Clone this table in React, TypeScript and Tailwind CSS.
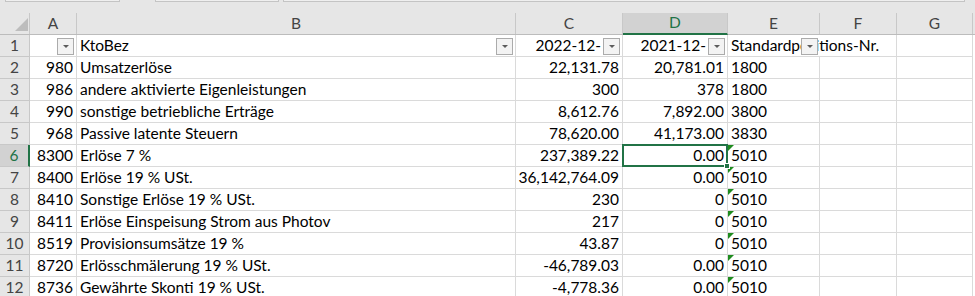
import React from "react";

const cols = [
  { key: "A", w: 47 },
  { key: "B", w: 439 },
  { key: "C", w: 107 },
  { key: "D", w: 105 },
  { key: "E", w: 92 },
  { key: "F", w: 77 },
  { key: "G", w: 76 },
];

const rows: Array<[string, string, string, string, string]> = [
  ["980", "Umsatzerlöse", "22,131.78", "20,781.01", "1800"],
  ["986", "andere aktivierte Eigenleistungen", "300", "378", "1800"],
  ["990", "sonstige betriebliche Erträge", "8,612.76", "7,892.00", "3800"],
  ["968", "Passive latente Steuern", "78,620.00", "41,173.00", "3830"],
  ["8300", "Erlöse 7 %", "237,389.22", "0.00", "5010"],
  ["8400", "Erlöse 19 % USt.", "36,142,764.09", "0.00", "5010"],
  ["8410", "Sonstige Erlöse 19 % USt.", "230", "0", "5010"],
  ["8411", "Erlöse Einspeisung Strom aus Photov", "217", "0", "5010"],
  ["8519", "Provisionsumsätze 19 %", "43.87", "0", "5010"],
  ["8720", "Erlösschmälerung 19 % USt.", "-46,789.03", "0.00", "5010"],
  ["8736", "Gewährte Skonti 19 % USt.", "-4,778.36", "0.00", "5010"],
];

function FilterButton() {
  return (
    <div className="absolute right-[2px] top-[3px] w-[17px] h-[17px] border border-[#ababab] bg-[#f3f3f3] flex items-center justify-center">
      <div className="w-0 h-0 border-l-[3.5px] border-r-[3.5px] border-t-[3.5px] border-l-transparent border-r-transparent border-t-[#5c5c5c]" />
    </div>
  );
}

function ErrorMark() {
  return (
    <div className="absolute left-0 top-0 w-0 h-0 border-t-[6px] border-r-[6px] border-t-[#1e8c1e] border-r-transparent" />
  );
}

export default function App() {
  const cell = "relative h-[22px] border-r border-b border-[#dadada] flex items-center";
  return (
    <div className="w-[975px] h-[296px] overflow-hidden bg-white text-black" style={{ fontFamily: "Lato, 'Open Sans', sans-serif" }}>
      {/* formula bar remnants */}
      <div className="h-[13px] bg-[#e6e6e6] flex items-start">
        <div className="ml-[5px] w-[115px] h-[2px] border-x border-b border-[#c4c4c4] bg-[#efefef]" />
        <div className="ml-[35px] w-[124px] h-[2px] border-x border-b border-[#c4c4c4] bg-[#efefef]" />
        <div className="ml-[4px] w-[682px] h-[2px] border-x border-b border-[#c4c4c4] bg-[#efefef]" />
      </div>

      {/* column headers */}
      <div className="flex h-[22px] bg-[#e6e6e6] border-b border-[#bcbcbc] text-[15.5px] text-[#444]">
        <div className="relative w-[30px] shrink-0 border-r border-[#c8c8c8]">
          <svg className="absolute left-[15px] top-[5px]" width="13" height="13" viewBox="0 0 13 13">
            <polygon points="13,0 13,13 0,13" fill="#bdbdbd" />
          </svg>
        </div>
        {cols.map((c) => (
          <div
            key={c.key}
            style={{ width: c.w }}
            className={
              c.key === "D"
                ? "shrink-0 flex items-center justify-center bg-[#d2d2d2] text-[#217346] border-r border-[#c8c8c8] border-b-2 border-b-[#217346] -mb-px"
                : "shrink-0 flex items-center justify-center border-r border-[#c8c8c8]"
            }
          >
            {c.key}
          </div>
        ))}
      </div>

      {/* row 1 (header row of data) */}
      <div className="flex text-[15.5px]">
        <div className="h-[22px] w-[30px] shrink-0 bg-[#e6e6e6] border-r border-b border-[#c8c8c8] flex items-center justify-center text-[#444]">1</div>
        <div className={cell} style={{ width: 47 }}>
          <FilterButton />
        </div>
        <div className={cell + " pl-[3px]"} style={{ width: 439 }}>
          KtoBez
          <FilterButton />
        </div>
        <div className={cell + " justify-end pr-[21px]"} style={{ width: 107 }}>
          2022-12-
          <FilterButton />
        </div>
        <div className={cell + " justify-end pr-[21px]"} style={{ width: 105 }}>
          2021-12-
          <FilterButton />
        </div>
        <div className="relative h-[22px] border-b border-[#dadada] flex items-center pl-[3px] whitespace-nowrap z-10" style={{ width: 92 }}>
          Standardpositions-Nr.
          <FilterButton />
        </div>
        <div className={cell} style={{ width: 77 }} />
        <div className={cell} style={{ width: 76 }} />
      </div>

      {rows.map((r, i) => {
        const n = i + 2;
        const sel = n === 6;
        return (
          <div key={n} className="flex text-[15.5px]">
            <div
              className={
                sel
                  ? "h-[22px] w-[30px] shrink-0 bg-[#d2d2d2] border-r-2 border-r-[#217346] border-b border-b-[#c8c8c8] flex items-center justify-center text-[#217346]"
                  : "h-[22px] w-[30px] shrink-0 bg-[#e6e6e6] border-r border-b border-[#c8c8c8] flex items-center justify-center text-[#444]"
              }
            >
              {n}
            </div>
            <div className={cell + " justify-end pr-[3px]"} style={{ width: 47 }}>{r[0]}</div>
            <div className={cell + " pl-[3px] whitespace-nowrap"} style={{ width: 439 }}>{r[1]}</div>
            <div className={cell + " justify-end pr-[3px]"} style={{ width: 107 }}>{r[2]}</div>
            <div className={cell + " justify-end pr-[3px]"} style={{ width: 105 }}>
              {r[3]}
              {sel && (
                <div className="absolute -left-[1px] -top-[1px] w-[106px] h-[23px] border-2 border-[#217346] z-20">
                  <div className="absolute -right-[4px] -bottom-[4px] w-[6px] h-[6px] bg-[#217346] border border-white" />
                </div>
              )}
            </div>
            <div className={cell + " pl-[3px]"} style={{ width: 92 }}>
              {n >= 6 && <ErrorMark />}
              {r[4]}
            </div>
            <div className={cell} style={{ width: 77 }} />
            <div className={cell} style={{ width: 76 }} />
          </div>
        );
      })}
    </div>
  );
}
